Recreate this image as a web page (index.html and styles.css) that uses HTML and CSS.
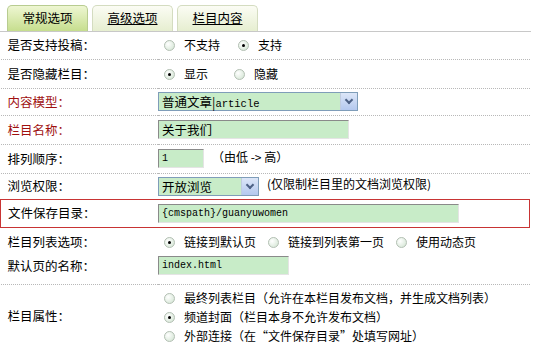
FILE: index.html
```html
<!DOCTYPE html>
<html lang="zh">
<head>
  <meta charset="UTF-8" />
  <title>栏目设置</title>
  <link rel="stylesheet" href="styles.css">
</head>
<body>

  <div class="tabs">
    <span class="tab active">常规选项</span>
    <span class="tab"><u>高级选项</u></span>
    <span class="tab"><u>栏目内容</u></span>
  </div>

  <table class="form">
    <tr class="r27">
      <td class="lbl">是否支持投稿：</td>
      <td class="fld"><span class="radio"></span><span class="opt wide">不支持</span><span class="radio on"></span><span class="opt">支持</span></td>
    </tr>
    <tr class="r29">
      <td class="lbl">是否隐藏栏目：</td>
      <td class="fld"><span class="radio on"></span><span class="opt wide2">显示</span><span class="radio"></span><span class="opt">隐藏</span></td>
    </tr>
    <tr class="r27">
      <td class="lbl red">内容模型：</td>
      <td class="fld"><span class="select w200"><span class="val">普通文章|<span class="mono">article</span></span><span class="arrow"></span></span></td>
    </tr>
    <tr class="r29">
      <td class="lbl red">栏目名称：</td>
      <td class="fld"><span class="input w190">关于我们</span></td>
    </tr>
    <tr class="r29">
      <td class="lbl">排列顺序：</td>
      <td class="fld"><span class="input w46 mono">1</span><span class="hint">（由低 -&gt; 高）</span></td>
    </tr>
    <tr class="r26">
      <td class="lbl">浏览权限：</td>
      <td class="fld"><span class="select w100"><span class="val">开放浏览</span><span class="arrow"></span></span><span class="note">(仅限制栏目里的文档浏览权限)</span></td>
    </tr>
    <tr class="r28 boxed">
      <td class="lbl">文件保存目录：</td>
      <td class="fld"><span class="input w300 mono">{cmspath}/guanyuwomen</span></td>
    </tr>
    <tr class="r29 plain">
      <td class="lbl">栏目列表选项：</td>
      <td class="fld"><span class="radio on"></span><span class="opt">链接到默认页</span><span class="radio"></span><span class="opt">链接到列表第一页</span><span class="radio"></span><span class="opt">使用动态页</span></td>
    </tr>
    <tr class="r28">
      <td class="lbl top">默认页的名称：</td>
      <td class="fld top"><span class="input w130 mono">index.html</span></td>
    </tr>
    <tr>
      <td class="lbl">栏目属性：</td>
      <td class="fld stack">
        <div><span class="radio"></span><span class="opt">最终列表栏目（允许在本栏目发布文档，并生成文档列表）</span></div>
        <div><span class="radio on"></span><span class="opt">频道封面（栏目本身不允许发布文档）</span></div>
        <div><span class="radio"></span><span class="opt">外部连接（在“文件保存目录”处填写网址）</span></div>
      </td>
    </tr>
  </table>

</body>
</html>
```

FILE: styles.css
```css
body {
  margin: 0;
  font-family: "Noto Sans CJK SC", "DejaVu Sans", sans-serif;
  font-size: 12px;
  color: #000;
  background: #fff;
  width: 545px;
  overflow: hidden;
}
.tabs {
  height: 26px;
  padding: 5px 0 0 7px;
  border-bottom: 1px solid #c8c8c8;
  width: 524px;
  display: flex;
  gap: 4px;
}
.tab {
  width: 79px;
  height: 25px;
  line-height: 24px;
  text-align: center;
  border: 1px solid #d4dcc0;
  border-bottom: none;
  border-radius: 5px 5px 0 0;
  background: linear-gradient(#fbfcf4, #e6eed0);
  font-size: 12.5px;
}
.tab.active {
  background: linear-gradient(#eef6d2, #c6de8e);
  border-color: #b8cc90;
}
.form {
  border-collapse: collapse;
  width: 530px;
  line-height: 16px;
}
.form td {
  padding: 0;
  border-bottom: 1px dotted #b8b8b8;
  white-space: nowrap;
  vertical-align: middle;
}
.r26 { height: 26px; }
.r27 { height: 27px; }
.r28 { height: 28px; }
.r29 { height: 29px; }
.lbl {
  width: 150px;
  padding-left: 7px !important;
  font-size: 12.5px;
}
.fld { padding-left: 0; }
.form td.top { vertical-align: top; }
.form td.lbl.top { padding-top: 2px; }
.red { color: #a01010; }
.boxed td {
  border-top: 1px solid #c83434;
  border-bottom: 1px solid #c83434;
}
.boxed td:first-child { border-left: 1px solid #c83434; }
.boxed td:last-child { border-right: 1px solid #c83434; }
.plain td { border-bottom: none; }
.radio {
  display: inline-block;
  width: 9px;
  height: 9px;
  border-radius: 50%;
  border: 1px solid #b4c0b4;
  background: radial-gradient(circle at 35% 35%, #fff, #cfe2cf);
  vertical-align: -1px;
  margin: 0 9px 0 6px;
  position: relative;
}
.radio.on::after {
  content: "";
  position: absolute;
  left: 3px;
  top: 3px;
  width: 3px;
  height: 3px;
  background: #000;
  border-radius: 50%;
}
.opt { margin-right: 6px; }
.opt.wide { margin-right: 12px; }
.opt.wide2 { margin-right: 20px; }
.mono { font-family: "Liberation Mono", monospace; font-size: 10px; }
.input, .select {
  display: inline-block;
  height: 19px;
  line-height: 18px;
  vertical-align: middle;
  background: #c8ecc8;
  border-top: 1px solid #8a8a8a;
  border-left: 1px solid #8a8a8a;
  border-bottom: 1px solid #e4e4e4;
  border-right: 1px solid #e4e4e4;
  padding-left: 3px;
  box-sizing: border-box;
  font-size: 12.5px;
}
.input.mono { font-size: 10px; }
.select {
  display: inline-flex;
  border: 1px solid #7f9db9;
  padding: 0;
}
.select .val { flex: 1; padding-left: 3px; line-height: 17px; }
.select .mono { font-size: 10.5px; }
.arrow {
  width: 16px;
  height: 17px;
  background: linear-gradient(#dce6f8, #b4c8ee);
  border-left: 1px solid #c0cce0;
  position: relative;
}
.arrow::after {
  content: "";
  position: absolute;
  left: 5px;
  top: 4px;
  width: 4px;
  height: 4px;
  border-right: 2px solid #4d6185;
  border-bottom: 2px solid #4d6185;
  transform: rotate(45deg);
}
.w200 { width: 200px; }
.w190 { width: 191px; }
.w46 { width: 46px; }
.w100 { width: 101px; }
.w300 { width: 301px; }
.w130 { width: 131px; }
.hint { margin-left: 8px; }
.note { margin-left: 8px; }
.form td.stack { padding: 3px 0 3px 0; }
.stack div { height: 19px; line-height: 19px; }
```
